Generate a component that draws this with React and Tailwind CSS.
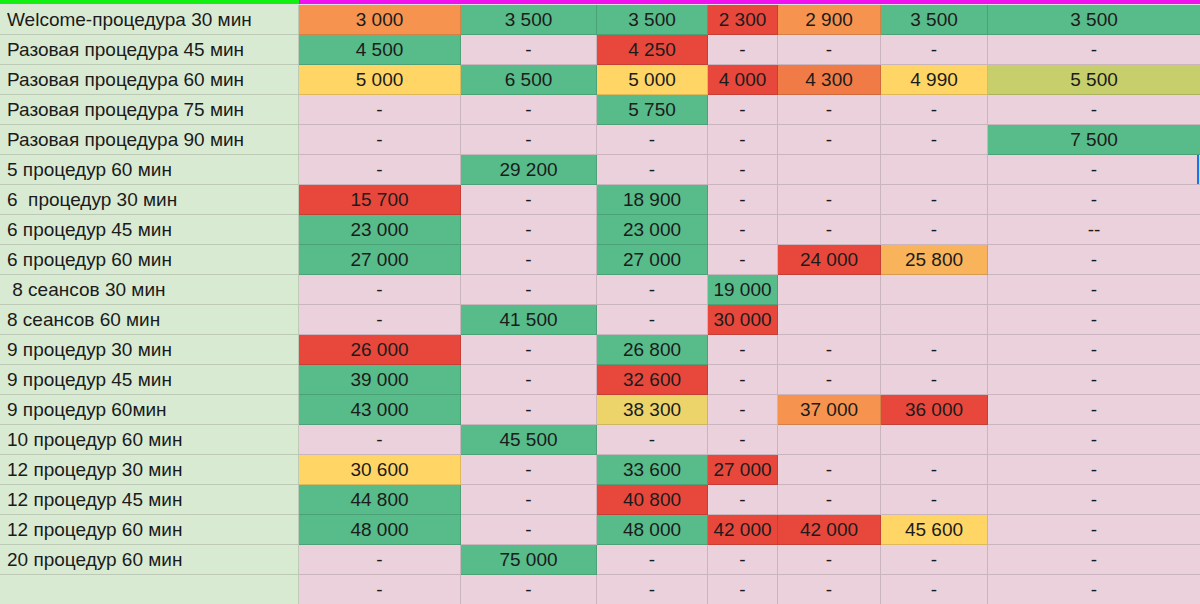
import React from 'react';

// colour codes used in the sheet
const colors = {
  G: 'bg-[#57bb8a]',
  R: 'bg-[#e8483c]',
  O: 'bg-[#f6944f]',
  O2: 'bg-[#f07b46]',
  O3: 'bg-[#f9b35b]',
  Y: 'bg-[#ffd666]',
  Y2: 'bg-[#ecd46b]',
  L: 'bg-[#c6cf6c]',
  P: 'bg-[#ead1dc]',
};

// each cell: [text, colour]; plain string = pink
const rows = [
  ['Welcome-процедура 30 мин', ['3 000', 'O'], ['3 500', 'G'], ['3 500', 'G'], ['2 300', 'R'], ['2 900', 'O'], ['3 500', 'G'], ['3 500', 'G']],
  ['Разовая процедура 45 мин', ['4 500', 'G'], '-', ['4 250', 'R'], '-', '-', '-', '-'],
  ['Разовая процедура 60 мин', ['5 000', 'Y'], ['6 500', 'G'], ['5 000', 'Y'], ['4 000', 'R'], ['4 300', 'O2'], ['4 990', 'Y'], ['5 500', 'L']],
  ['Разовая процедура 75 мин', '-', '-', ['5 750', 'G'], '-', '-', '-', '-'],
  ['Разовая процедура 90 мин', '-', '-', '-', '-', '-', '-', ['7 500', 'G']],
  ['5 процедур 60 мин', '-', ['29 200', 'G'], '-', '-', '', '', '-'],
  ['6\u00a0 процедур 30 мин', ['15 700', 'R'], '-', ['18 900', 'G'], '-', '-', '-', '-'],
  ['6 процедур 45 мин', ['23 000', 'G'], '-', ['23 000', 'G'], '-', '-', '-', '--'],
  ['6 процедур 60 мин', ['27 000', 'G'], '-', ['27 000', 'G'], '-', ['24 000', 'R'], ['25 800', 'O3'], '-'],
  ['\u00a08 сеансов 30 мин', '-', '-', '-', ['19 000', 'G'], '', '', '-'],
  ['8 сеансов 60 мин', '-', ['41 500', 'G'], '-', ['30 000', 'R'], '', '', '-'],
  ['9 процедур 30 мин', ['26 000', 'R'], '-', ['26 800', 'G'], '-', '-', '-', '-'],
  ['9 процедур 45 мин', ['39 000', 'G'], '-', ['32 600', 'R'], '-', '-', '-', '-'],
  ['9 процедур 60мин', ['43 000', 'G'], '-', ['38 300', 'Y2'], '-', ['37 000', 'O'], ['36 000', 'R'], '-'],
  ['10 процедур 60 мин', '-', ['45 500', 'G'], '-', '-', '', '', '-'],
  ['12 процедур 30 мин', ['30 600', 'Y'], '-', ['33 600', 'G'], ['27 000', 'R'], '-', '-', '-'],
  ['12 процедур 45 мин', ['44 800', 'G'], '-', ['40 800', 'R'], '-', '-', '-', '-'],
  ['12 процедур 60 мин', ['48 000', 'G'], '-', ['48 000', 'G'], ['42 000', 'R'], ['42 000', 'R'], ['45 600', 'Y'], '-'],
  ['20 процедур 60 мин', '-', ['75 000', 'G'], '-', '-', '-', '-', '-'],
  ['', '-', '-', '-', '-', '-', '-', '-'],
];

const grid = 'grid grid-cols-[299px_162px_136px_111px_70px_103px_107px_1fr]';

const App = () => {
  return (
    <div className="w-[1200px] h-[604px] overflow-hidden bg-white font-['Liberation_Sans',Arial,sans-serif] text-[19px] text-[#1b1b1b]">
      {/* bottom edge of the header row */}
      <div className={`${grid} h-[5px] border-b border-[#00000022]`}>
        <div className="bg-[#11f011]" />
        <div className="col-span-7 bg-[#f010f0]" />
      </div>

      {rows.map((row, i) => (
        <div key={i} className={`${grid} h-[30px]`}>
          <div className="bg-[#d9ead3] border-r border-b border-[#00000022] pl-[7px] pt-[1px] leading-[28px] whitespace-pre">
            {row[0]}
          </div>
          {row.slice(1).map((cell, j) => {
            const [text, c] = Array.isArray(cell) ? cell : [cell, 'P'];
            const last = j === 6;
            return (
              <div
                key={j}
                className={`relative ${colors[c]} border-b border-[#00000022] ${last ? '' : 'border-r'} pt-[1px] text-center leading-[28px]`}
              >
                {text}
                {last && i === 5 && (
                  <div className="absolute right-[1px] top-0 h-full w-[2px] bg-[#1a73e8]" />
                )}
              </div>
            );
          })}
        </div>
      ))}
    </div>
  );
};

export default App;
